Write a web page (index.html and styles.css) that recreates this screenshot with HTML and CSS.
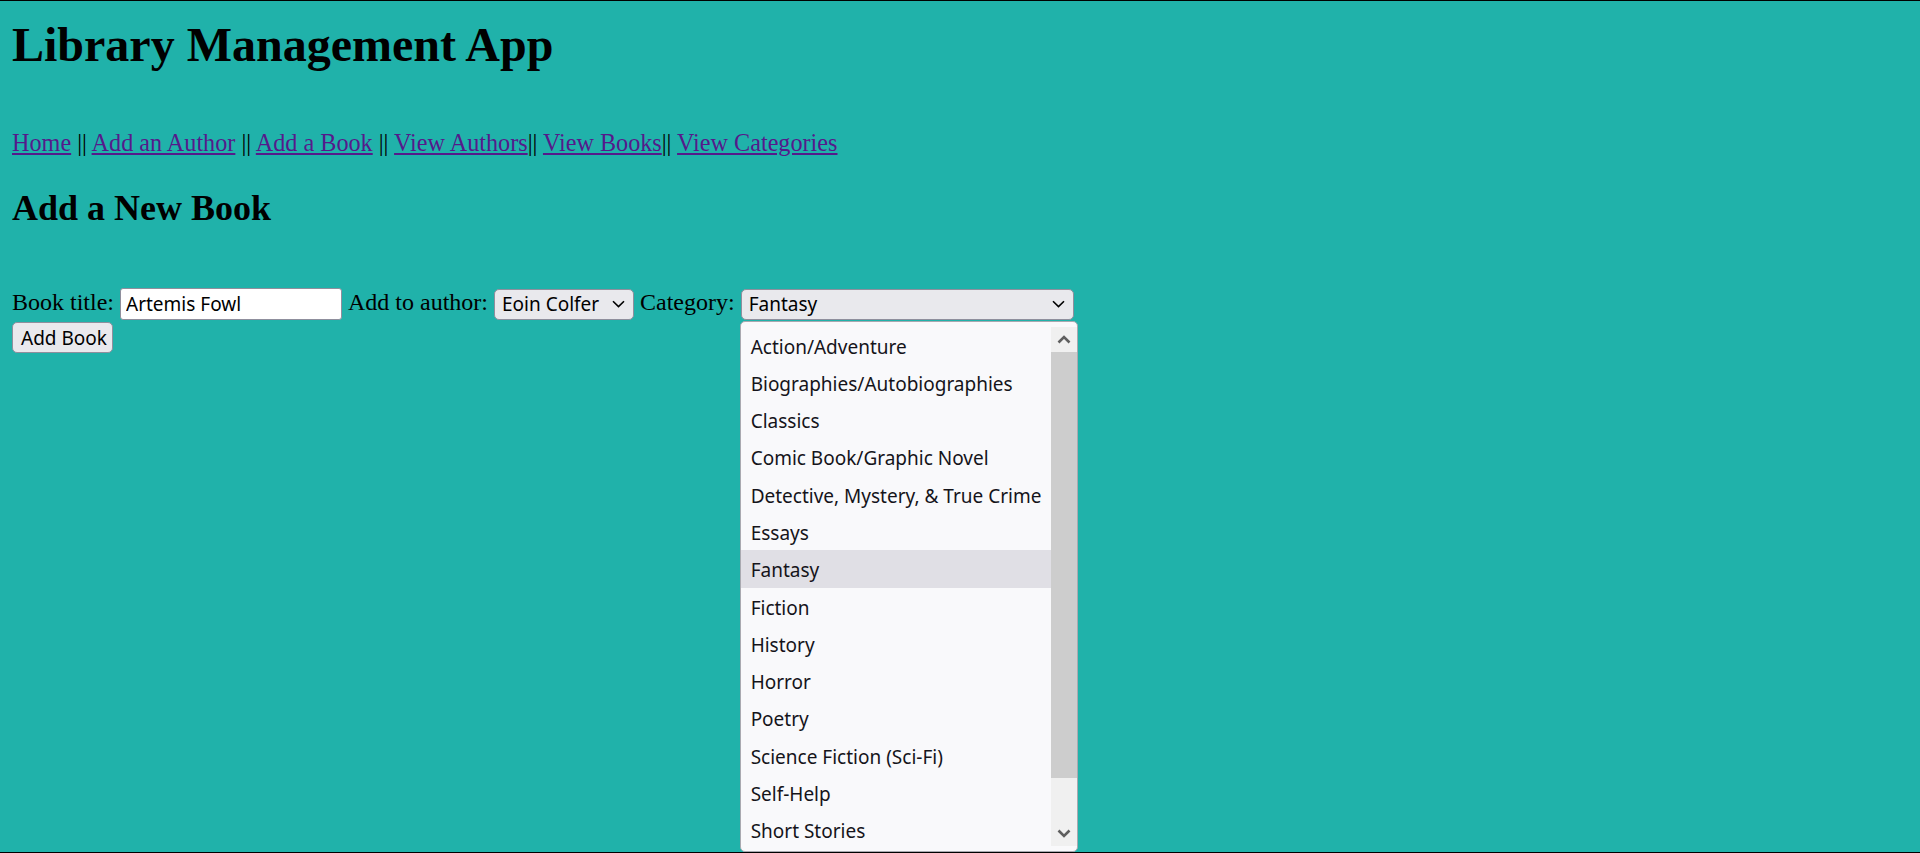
FILE: index.html
```html
<!DOCTYPE html>
<html lang="en">
<head>
<meta charset="utf-8">
<title>Library Management App</title>
<link rel="stylesheet" href="styles.css">
</head>
<body>
<div class="frame"></div>
<h1 class="title">Library Management App</h1>
<p class="nav"><a href="#">Home</a> || <a href="#">Add an Author</a> || <a href="#">Add a Book</a> || <a href="#">View Authors</a>|| <a href="#">View Books</a>|| <a href="#">View Categories</a></p>
<h2 class="subtitle">Add a New Book</h2>
<form class="book-form">
  <div class="row">
    <label class="lbl" for="title">Book title:</label>
    <input class="text-input" id="title" type="text" value="Artemis Fowl">
    <label class="lbl" for="author">Add to author:</label>
    <span class="select-wrap">
      <select class="sel sel-author" id="author"><option>Eoin Colfer</option></select>
      <svg class="sel-arrow" width="13" height="8" viewBox="0 0 13 8"><path d="M1 1.2 L6.5 6.6 L12 1.2" fill="none" stroke="#000" stroke-width="1.6"/></svg>
    </span>
    <label class="lbl" for="category">Category:</label>
    <span class="select-wrap">
      <select class="sel sel-category" id="category"><option>Fantasy</option></select>
      <svg class="sel-arrow" width="13" height="8" viewBox="0 0 13 8"><path d="M1 1.2 L6.5 6.6 L12 1.2" fill="none" stroke="#000" stroke-width="1.6"/></svg>
      <div class="popup">
        <ul class="opt-list">
          <li class="opt">Action/Adventure</li>
          <li class="opt">Biographies/Autobiographies</li>
          <li class="opt">Classics</li>
          <li class="opt">Comic Book/Graphic Novel</li>
          <li class="opt">Detective, Mystery, &amp; True Crime</li>
          <li class="opt">Essays</li>
          <li class="opt opt-active">Fantasy</li>
          <li class="opt">Fiction</li>
          <li class="opt">History</li>
          <li class="opt">Horror</li>
          <li class="opt">Poetry</li>
          <li class="opt">Science Fiction (Sci-Fi)</li>
          <li class="opt">Self-Help</li>
          <li class="opt">Short Stories</li>
        </ul>
        <div class="scrollbar">
          <div class="sb-btn"><svg width="14" height="9" viewBox="0 0 14 9"><path d="M1.5 7.5 L7 2 L12.5 7.5" fill="none" stroke="#5f5f5f" stroke-width="2.6"/></svg></div>
          <div class="sb-thumb"></div>
          <div class="sb-track"></div>
          <div class="sb-btn"><svg width="14" height="9" viewBox="0 0 14 9"><path d="M1.5 1.5 L7 7 L12.5 1.5" fill="none" stroke="#5f5f5f" stroke-width="2.6"/></svg></div>
        </div>
      </div>
    </span>
  </div>
  <div class="row-btn">
    <button class="btn" type="button">Add Book</button>
  </div>
</form>
</body>
</html>
```
FILE: styles.css
```css
html {
  background: #20b2aa;
  height: 100%;
}

body {
  box-sizing: border-box;
  min-height: 100%;
  margin: 0;
  padding: 17px 12px 0;
  background: #20b2aa;
  color: #000;
  font-family: "Liberation Serif", "Times New Roman", serif;
  font-size: 24px;
}

.frame {
  position: fixed;
  inset: 0;
  border-top: 1px solid #000;
  border-bottom: 1px solid #000;
  pointer-events: none;
  z-index: 20;
}

.title {
  margin: 0;
  font-size: 48px;
  font-weight: bold;
  line-height: 55px;
}

.nav {
  margin: 57px 0 0;
  font-size: 24.2px;
  line-height: 28px;
}

.nav a {
  color: #551a8b;
  text-decoration: underline;
}

.subtitle {
  margin: 31px 0 0;
  font-size: 36px;
  font-weight: bold;
  line-height: 41px;
}

.book-form {
  margin: 59px 0 0;
}

.row {
  display: flex;
  align-items: center;
  gap: 6px;
  height: 32px;
}

.lbl {
  line-height: 27px;
  padding-bottom: 4px;
}

.text-input,
.sel,
.btn,
.opt {
  font-family: "Noto Sans", "Open Sans", sans-serif;
  font-size: 19px;
  color: #000;
}

.text-input {
  box-sizing: border-box;
  width: 222px;
  height: 32px;
  margin: 0;
  padding: 0 5px;
  border: 1px solid #8f8f9d;
  border-radius: 3px;
  background: #fff;
  outline: none;
}

.select-wrap {
  position: relative;
  display: inline-block;
  height: 31px;
}

.sel {
  -webkit-appearance: none;
  appearance: none;
  box-sizing: border-box;
  height: 31px;
  margin: 0;
  padding: 0 0 0 7px;
  border: 1px solid #8f8f9d;
  border-radius: 5px;
  background: #e9e9ed;
  outline: none;
}

.sel-author {
  width: 140px;
}

.sel-category {
  width: 333px;
}

.sel-arrow {
  position: absolute;
  right: 9px;
  top: 11px;
  pointer-events: none;
}

.popup {
  position: absolute;
  top: 32px;
  left: -1px;
  box-sizing: border-box;
  width: 338px;
  height: 531px;
  padding: 5px 0;
  border: 1px solid #a9a9b0;
  border-radius: 5px;
  background: #f9f9fb;
  display: flex;
  z-index: 10;
}

.opt-list {
  flex: 1;
  margin: 0;
  padding: 0;
  list-style: none;
  overflow: hidden;
}

.opt {
  box-sizing: border-box;
  height: 37.3px;
  padding: 3px 0 0 10px;
  line-height: 34.3px;
  white-space: nowrap;
  color: #15141a;
}

.opt-active {
  background: #e0dfe5;
}

.scrollbar {
  width: 26px;
  display: flex;
  flex-direction: column;
  background: #f0f0f0;
}

.sb-btn {
  height: 25px;
  display: flex;
  align-items: center;
  justify-content: center;
  background: #f0f0f0;
}

.sb-thumb {
  height: 426px;
  background: #cdcdcd;
}

.sb-track {
  flex: 1;
}

.row-btn {
  margin-top: 2px;
}

.btn {
  box-sizing: border-box;
  width: 101px;
  height: 31px;
  margin: 0;
  padding: 0 0 0 8px;
  text-align: left;
  border: 1px solid #8f8f9d;
  border-radius: 5px;
  background: #e9e9ed;
}
```
